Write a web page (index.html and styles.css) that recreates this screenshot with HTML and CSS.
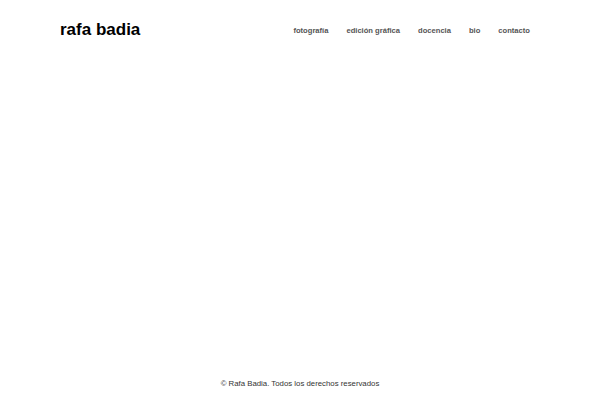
FILE: index.html
```html
<!DOCTYPE html>
<html lang="es">
<head>
<meta charset="utf-8">
<title>rafa badia</title>
<link rel="stylesheet" href="styles.css">
</head>
<body>
<div class="page">
  <header class="header">
    <div class="logo">rafa badia</div>
    <nav class="nav">
      <a href="#">fotografía</a>
      <a href="#">edición gráfica</a>
      <a href="#">docencia</a>
      <a href="#">bio</a>
      <a href="#">contacto</a>
    </nav>
  </header>
  <main class="main"></main>
  <footer class="footer">© Rafa Badia. Todos los derechos reservados</footer>
</div>
</body>
</html>
```
FILE: styles.css
```css
html, body {
  margin: 0;
  padding: 0;
  background: #fff;
}
.page {
  width: 600px;
  height: 400px;
  display: flex;
  flex-direction: column;
}
.header {
  display: flex;
  justify-content: space-between;
  align-items: center;
  padding: 18px 70px 0 60px;
  height: 24px;
}
.logo {
  font-family: "Liberation Sans", Arial, sans-serif;
  font-weight: bold;
  font-size: 17px;
  color: #000;
}
.nav {
  display: flex;
  gap: 18px;
}
.nav a {
  font-family: "Liberation Sans", Arial, sans-serif;
  font-weight: bold;
  font-size: 7.6px;
  color: #555;
  text-decoration: none;
}
.main {
  flex: 1;
}
.footer {
  font-family: "Liberation Sans", Arial, sans-serif;
  font-size: 7.8px;
  color: #333;
  text-align: center;
  padding-bottom: 12px;
}
```
